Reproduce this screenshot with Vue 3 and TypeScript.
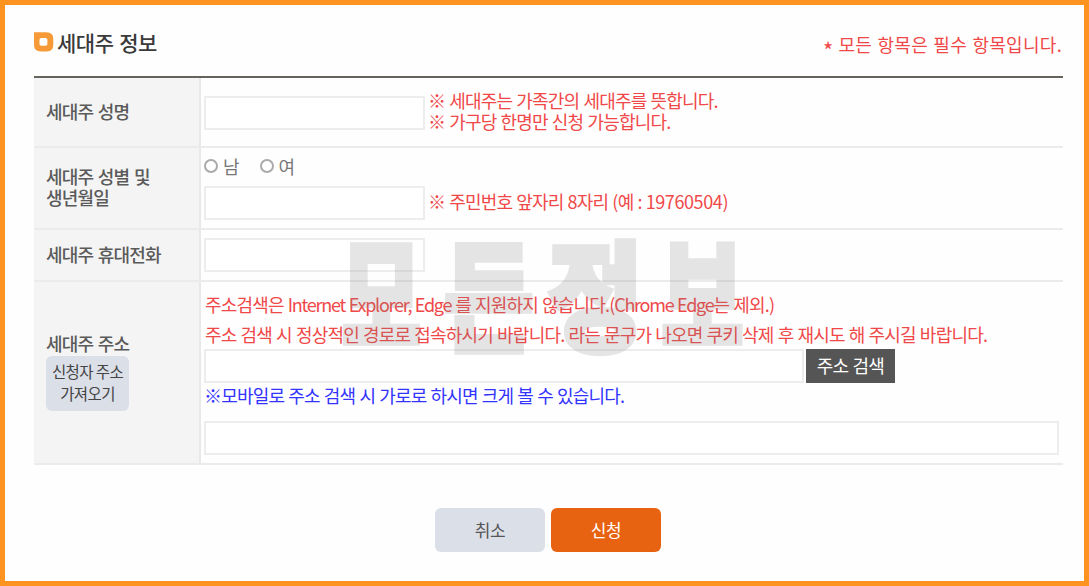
<script setup lang="ts">
import { ref } from 'vue'

const name = ref('')
const birth = ref('')
const phone = ref('')
const address = ref('')
const addressDetail = ref('')
const gender = ref('')
const watermark: { char: string; shape: string }[] = [
  { char: '모', shape: 'mo' },
  { char: '든', shape: 'deun' },
  { char: '정', shape: 'jeong' },
  { char: '보', shape: 'bo' },
]
</script>

<template>
  <main class="page">
    <header class="head">
      <h1 class="title">
        <svg class="mark" viewBox="0 0 20 20" width="20" height="20">
          <path fill="#f59a36" fill-rule="evenodd" d="M0 .3H12.5Q19.3.3 19.3 7V12.8Q19.3 19.5 12.5 19.5H7Q0 19.5 0 12.8ZM7.3 6Q5.5 6 5.5 7.8V12Q5.5 13.8 7.3 13.8H11.6Q13.4 13.8 13.4 12V7.8Q13.4 6 11.6 6Z" />
        </svg>
        <span class="title-text">세대주 정보</span>
      </h1>
      <p class="required"><span class="star">*</span> 모든 항목은 필수 항목입니다.</p>
    </header>

    <form class="table" @submit.prevent>
      <div class="row row-name">
        <div class="label"><span>세대주 성명</span></div>
        <div class="cell inline">
          <input v-model="name" class="field" type="text" />
          <p class="note">※ 세대주는 가족간의 세대주를 뜻합니다.<br />※ 가구당 한명만 신청 가능합니다.</p>
        </div>
      </div>
      <div class="row row-birth">
        <div class="label"><span>세대주 성별 및<br />생년월일</span></div>
        <div class="cell">
          <div class="radios">
            <label class="radio"><input v-model="gender" type="radio" value="m" />남</label>
            <label class="radio"><input v-model="gender" type="radio" value="f" />여</label>
          </div>
          <div class="inline">
            <input v-model="birth" class="field" type="text" />
            <p class="note">※ 주민번호 앞자리 8자리 (예 : <span class="digits">19760504)</span></p>
          </div>
        </div>
      </div>
      <div class="row row-phone">
        <div class="label"><span>세대주 휴대전화</span></div>
        <div class="cell inline"><input v-model="phone" class="field" type="text" /></div>
      </div>
      <div class="row row-address">
        <div class="label">
          <span>세대주 주소</span>
          <button class="fetch" type="button">신청자 주소<br />가져오기</button>
        </div>
        <div class="cell">
          <p class="note guide">주소검색은 <span class="latin">Internet Explorer, Edge</span> 를 지원하지 않습니다.<span class="latin">(Chrome Edge</span>는 제외.)</p>
          <p class="note guide">주소 검색 시 정상적인 경로로 접속하시기 바랍니다. 라는 문구가 나오면 쿠키 삭제 후 재시도 해 주시길 바랍니다.</p>
          <div class="inline">
            <input v-model="address" class="field wide" type="text" />
            <button class="search" type="button">주소 검색</button>
          </div>
          <p class="note mobile">※모바일로 주소 검색 시 가로로 하시면 크게 볼 수 있습니다.</p>
          <input v-model="addressDetail" class="field full" type="text" />
        </div>
      </div>
    </form>

    <div class="actions">
      <button class="action cancel" type="button">취소</button>
      <button class="action submit" type="button">신청</button>
    </div>

    <div class="watermark" aria-hidden="true">
      <span v-for="w in watermark" :key="w.char" :class="w.shape">{{ w.char }}</span>
    </div>
  </main>
</template>

<style>
body { background: #fff; overflow: hidden; }
</style>

<style scoped>
* { box-sizing: border-box; }
.page {
  position: relative;
  width: 1089px;
  height: 586px;
  padding: 0 22px 0 29px;
  border: 5px solid #ff931f;
  background: #fefefe;
  font-family: "Noto Sans CJK KR", sans-serif;
  font-size: 18px;
  color: #555;
  overflow: hidden;
}
p, h1 { margin: 0; font-weight: 400; white-space: nowrap; }
button { padding: 0; border: 0; font-family: inherit; white-space: nowrap; }
.head { display: flex; justify-content: space-between; height: 71px; }
.title { display: flex; gap: 3px; padding-top: 27px; line-height: 22px; }
.mark { flex: none; }
.title-text { margin-top: -1px; font-size: 21px; font-weight: 500; letter-spacing: -0.5px; word-spacing: 1.5px; color: #3a3a3a; }
.required { padding-top: 28px; line-height: 22px; letter-spacing: 0.3px; word-spacing: 1px; color: #f04848; }
.star { display: inline-block; width: 10px; font-size: 22px; line-height: 18px; vertical-align: -7px; }
.table { width: 1029px; border-top: 2px solid #66635d; }
.row { display: flex; border-bottom: 2px solid #ebebeb; }
.row-name { height: 70px; }
.row-birth { height: 82px; }
.row-phone { height: 52px; }
.row-address { height: 183px; }
.label {
  display: flex;
  flex-direction: column;
  align-items: flex-start;
  justify-content: center;
  flex: none;
  width: 167px;
  padding: 0 0 2px 12px;
  border-right: 2px solid #e8e8e8;
  background: #f4f4f4;
  font-weight: 500;
  line-height: 21px;
  letter-spacing: -0.8px;
  word-spacing: 1.3px;
  white-space: nowrap;
  color: #5a5a5a;
}
.cell { flex: 1; padding-left: 3px; }
.inline { display: flex; align-items: center; }
.row-name .cell { padding-top: 1px; }
.field {
  display: block;
  flex: none;
  width: 221px;
  height: 34px;
  padding: 0 8px;
  border: 2px solid #ededed;
  background: #fff;
  outline: none;
}
.field.wide { width: 600px; }
.field.full { width: 855px; }
.note { margin: -3px 0 0 3px; line-height: 21px; letter-spacing: -0.8px; word-spacing: 0.8px; color: #f04848; }
.digits { letter-spacing: -0.4px; }
.latin { letter-spacing: -1.25px; }
.radios { display: flex; gap: 20px; height: 38px; padding-top: 7px; line-height: 22px; color: #777; }
.radio { display: flex; align-items: center; gap: 5px; height: 22px; }
.radio input {
  appearance: none;
  width: 14px;
  height: 14px;
  margin: 0;
  border: 2px solid #aaa;
  border-radius: 50%;
  background: #fff;
}
.fetch {
  width: 83px;
  height: 55px;
  margin-top: 2px;
  padding-bottom: 2px;
  border-radius: 6px;
  background: #dbdfe8;
  font-size: 15.5px;
  line-height: 22px;
  letter-spacing: -0.6px;
  color: #444;
}
.guide { margin: 0 0 0 1px; line-height: 30px; }
.guide:first-child { height: 37px; padding-top: 7px; }
.guide + .guide { height: 30px; }
.search {
  width: 89px;
  height: 34px;
  margin-left: 2px;
  padding-bottom: 2px;
  background: #555;
  font-size: 18px;
  letter-spacing: -0.8px;
  word-spacing: 1px;
  color: #fff;
}
.mobile { height: 38px; margin: 0; padding-top: 2px; color: #3333ff; }
.actions { display: flex; gap: 6px; margin: 43px 0 0 401px; }
.action { width: 110px; height: 44px; padding-bottom: 2px; border-radius: 6px; font-size: 17px; letter-spacing: -0.3px; }
.cancel { background: #dbdfe8; color: #555; }
.submit { background: #e86311; color: #fff; }
.watermark {
  position: absolute;
  left: 323px;
  top: 216px;
  display: flex;
  color: #828282;
  opacity: 0.2;
  pointer-events: none;
}
.watermark span {
  width: 107px;
  font-size: 112px;
  font-weight: 900;
  line-height: 140px;
  text-align: center;
  -webkit-text-stroke: 5px #828282;
}
.mo { transform: translateY(-2px) scale(0.77, 1.13); }
.deun { transform: translateY(-1px) scale(0.87, 1.07); }
.jeong { transform: translateY(-1px) scale(0.93, 1.07); }
.bo { transform: translateY(-2px) scale(0.8, 1.13); }
</style>
